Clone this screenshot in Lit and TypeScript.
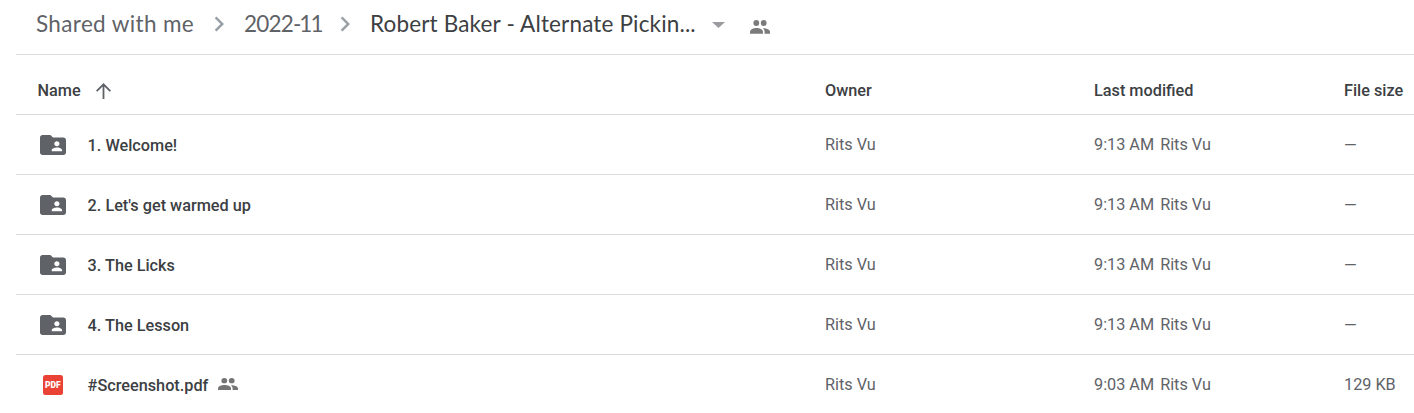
import { LitElement, html, css, svg } from "lit";
import { customElement } from "lit/decorators.js";

interface FileRow {
  name: string;
  kind: "folder" | "pdf";
  time: string;
  size: string;
}

const rows: FileRow[] = [
  { name: "1. Welcome!", kind: "folder", time: "9:13 AM", size: "—" },
  { name: "2. Let's get warmed up", kind: "folder", time: "9:13 AM", size: "—" },
  { name: "3. The Licks", kind: "folder", time: "9:13 AM", size: "—" },
  { name: "4. The Lesson", kind: "folder", time: "9:13 AM", size: "—" },
  { name: "#Screenshot.pdf", kind: "pdf", time: "9:03 AM", size: "129 KB" },
];

const chevron = html`<svg class="chevron" width="30" height="30" viewBox="0 0 24 24">
  <path d="M8.59 16.59L13.17 12 8.59 7.41 10 6l6 6-6 6z" />
</svg>`;

const people = svg`
  <circle cx="6.3" cy="3" r="2.9" />
  <circle cx="13.7" cy="3" r="2.9" />
  <path d="M0 13.7v-1.9C0 9.3 3.7 8 6.5 8s6.5 1.3 6.5 3.8v1.9z" />
  <path d="M14.6 13.7v-1.9c0-1.500-.7-2.700-1.800-3.600C16 8 20 9.300 20 11.800v1.900z" />`;

const folder = html`<svg class="folder" width="26" height="20" viewBox="2 4 20 16" preserveAspectRatio="none">
  <path d="M20 6h-8l-2-2H4c-1.100 0-1.990.9-1.990 2L2 18c0 1.100.9 2 2 2h16c1.100 0 2-.9 2-2V8c0-1.100-.9-2-2-2zm-5 3c1.100 0 2 .9 2 2s-.9 2-2 2-2-.9-2-2 .9-2 2-2zm4 8h-8v-1c0-1.330 2.670-2 4-2s4 .67 4 2v1z" />
</svg>`;

const pdf = html`<span class="pdf"><span class="pdf-text">PDF</span></span>`;

@customElement("app-root")
export class AppRoot extends LitElement {
  static styles = css`
    :host {
      display: block;
      height: 413px;
      overflow: hidden;
      background: #fff;
      font-family: Roboto, sans-serif;
      font-size: 16.25px;
      color: #3c4043;
    }
    svg { display: block; flex: none; }
    .crumbs {
      box-sizing: border-box;
      display: flex;
      align-items: center;
      height: 55px;
      margin-left: 16px;
      padding: 0 0 7px 20px;
      border-bottom: 1px solid #dadce0;
      font-family: Lato, sans-serif;
      font-size: 22.5px;
      line-height: 30px;
      white-space: nowrap;
      color: #5f6368;
    }
    .crumb { flex: none; }
    .c1 { width: 168px; letter-spacing: 0.35px; }
    .c2 { width: 86px; margin-left: 10px; letter-spacing: -0.8px; }
    .tight { letter-spacing: -2px; }
    .c3 { width: 332px; margin-left: 10px; color: #3c4043; letter-spacing: 0.16px; }
    .chevron { fill: #9aa0a6; }
    .caret { fill: #9a9c9f; margin: 2px 0 0 10px; }
    .group { fill: #7b7b7b; margin: 6px 0 0 25px; }
    .row {
      box-sizing: border-box;
      display: grid;
      grid-template-columns: 809px 269px 250px 70px;
      align-items: center;
      height: 60px;
      margin-left: 16px;
      border-bottom: 1px solid #dadce0;
      white-space: nowrap;
      line-height: 20px;
      color: #5f6368;
    }
    .row:last-child { border-bottom-color: transparent; }
    .head { font-weight: 500; color: #3c4043; padding-top: 12px; }
    .cell { display: flex; align-items: center; }
    .first { padding-left: 21.5px; }
    .sort { fill: #5f6368; margin-left: 15px; }
    .icon { width: 26px; margin: 0 21.500px 0 2.500px; display: flex; justify-content: center; }
    .folder { fill: #5f6368; }
    .name { font-weight: 500; color: #3c4043; margin: 2px 0 0 0.1px; }
    .small { fill: #757575; margin: -2px 0 0 9.5px; }
    .by { margin-left: 6px; }
    .dash { padding-top: 2px; }
    .pdf {
      display: flex;
      align-items: center;
      justify-content: center;
      width: 20px;
      height: 20px;
      border-radius: 2.5px;
      background: #ea4335;
    }
    .pdf-text {
      font: 900 9.5px/10px Roboto, sans-serif;
      color: #fff;
      transform: scaleX(0.9);
    }
  `;

  render() {
    return html`
      <nav class="crumbs">
        <span class="crumb c1">Shared with me</span>
        ${chevron}
        <span class="crumb c2">2022<span class="tight">-11</span></span>
        ${chevron}
        <span class="crumb c3">Robert Baker - Alternate Pickin...</span>
        <svg class="caret" width="13" height="6" viewBox="0 0 13 6"><path d="M0 0h13L6.500 6z" /></svg>
        <svg class="group" width="20" height="14" viewBox="0 0 20 14">${people}</svg>
      </nav>
      <div class="row head">
        <div class="cell first">
          <span>Name</span>
          <svg class="sort" width="15" height="16" viewBox="0 0 15 16">
            <path d="M0 7.500L1.300 8.800 6.600 3.500V16h1.800V3.500l5.300 5.300L15 7.500 7.500 0z" />
          </svg>
        </div>
        <div>Owner</div>
        <div>Last modified</div>
        <div>File size</div>
      </div>
      ${rows.map(
        (r) => html`<div class="row">
          <div class="cell first">
            <span class="icon">${r.kind === "folder" ? folder : pdf}</span>
            <span class="name">${r.name}</span>
            ${r.kind === "pdf"
              ? html`<svg class="small" width="20" height="12" viewBox="0 0 20 13.700" preserveAspectRatio="none">${people}</svg>`
              : ""}
          </div>
          <div>Rits Vu</div>
          <div>${r.time}<span class="by">Rits Vu</span></div>
          <div class=${r.kind === "folder" ? "dash" : ""}>${r.size}</div>
        </div>`
      )}
    `;
  }
}
